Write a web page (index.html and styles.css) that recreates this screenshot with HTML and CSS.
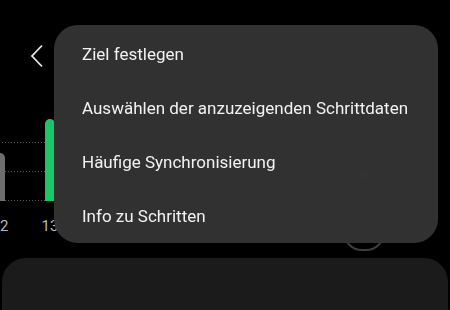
FILE: index.html
```html
<!DOCTYPE html>
<html lang="de">

<head>
    <meta charset="UTF-8">
    <meta name="viewport" content="width=device-width, initial-scale=1.0">
    <title>Schritte</title>
    <link rel="stylesheet" href="styles.css">
</head>

<body>
    <div class="app">
        <div class="topbar">
            <svg class="back" width="14" height="24" viewBox="0 0 14 24">
                <polyline points="12,1.5 2,12 12,22.5" fill="none" stroke="#e6e6e6" stroke-width="1.8" />
            </svg>
        </div>

        <div class="chart">
            <div class="plot">
                <div class="day">
                    <div class="bar gray" style="height: 48px"></div>
                </div>
                <div class="day">
                    <div class="bar green" style="height: 82px"></div>
                </div>
                <div class="day">
                    <div class="bar gray" style="height: 30px"></div>
                </div>
                <div class="day">
                    <div class="bar gray" style="height: 22px"></div>
                </div>
                <div class="day">
                    <div class="bar gray" style="height: 40px"></div>
                </div>
                <div class="day">
                    <div class="bar gray" style="height: 18px"></div>
                </div>
                <div class="day">
                    <div class="bar gray" style="height: 26px"></div>
                </div>
                <div class="day today">
                    <div class="bar green dim" style="height: 56px"></div>
                </div>
            </div>
            <!-- labels behind the open menu are left empty -->
            <div class="labels">
                <div class="day">12</div>
                <div class="day">13</div>
                <div class="day"></div>
                <div class="day"></div>
                <div class="day"></div>
                <div class="day"></div>
                <div class="day"></div>
                <div class="day today"><span class="ring"></span></div>
            </div>
        </div>

        <div class="card"></div>

        <!-- overflow menu, opened over the chart -->
        <div class="menu">
            <div class="menu-item">Ziel festlegen</div>
            <div class="menu-item">Auswählen der anzuzeigenden Schrittdaten</div>
            <div class="menu-item">Häufige Synchronisierung</div>
            <div class="menu-item">Info zu Schritten</div>
        </div>
    </div>
</body>

</html>
```

FILE: styles.css
```css
body,
html {
    margin: 0;
    height: 100%;
    background-color: #000;
    font-family: Roboto, "Noto Sans", sans-serif;
    overflow: hidden;
}

.app {
    position: relative;
    width: 450px;
    height: 310px;
    overflow: hidden;
}

.topbar {
    height: 68px;
    padding: 44px 0 0 30px;
    box-sizing: border-box;
}

.back {
    display: block;
}

.chart {
    margin-top: 44px;
    width: 430px;
}

.plot {
    display: flex;
    align-items: flex-end;
    height: 89px;
    margin-left: -25px;
    /* dotted guide lines */
    background-image:
        linear-gradient(90deg, #5a5a5a 50%, transparent 50%),
        linear-gradient(90deg, #5a5a5a 50%, transparent 50%),
        linear-gradient(90deg, #5a5a5a 50%, transparent 50%);
    background-size: 3px 1px;
    background-repeat: repeat-x;
    background-position: 0 30px, 0 59px, 0 88px;
}

.day {
    width: 50px;
    flex: none;
    display: flex;
    justify-content: center;
}

.day.today {
    margin-left: 14px;
}

.bar {
    width: 10px;
    border-radius: 5px 5px 0 0;
}

.bar.gray {
    background-color: #6e6e6e;
}

.bar.green {
    background-color: #1ec567;
}

.bar.dim {
    background-color: #2c8a52;
}

.labels {
    display: flex;
    height: 20px;
    margin: 15px 0 0 -25px;
    font-size: 15px;
    line-height: 20px;
    color: #b8b8b8;
}

.ring {
    display: block;
    flex: none;
    width: 38px;
    height: 34px;
    margin-top: -3px;
    border: 2px solid #3c3c3c;
    border-radius: 20px;
}

.card {
    height: 80px;
    margin: 22px 2px 0 2px;
    background-color: #1b1b1b;
    border-radius: 24px;
}

.menu {
    position: absolute;
    left: 54px;
    top: 25px;
    width: 384px;
    padding-top: 2px;
    border-radius: 24px;
    background-color: rgba(52, 52, 52, 0.95);
    backdrop-filter: blur(24px);
    overflow: hidden;
}

.menu-item {
    height: 54px;
    line-height: 54px;
    padding-left: 28px;
    font-size: 17px;
    color: #f2f2f2;
    white-space: nowrap;
}
```
